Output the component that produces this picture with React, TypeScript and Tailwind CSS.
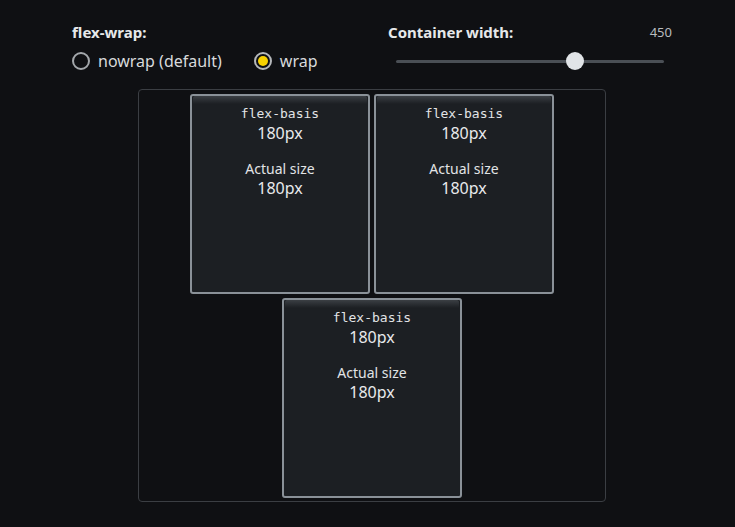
const boxes = [0, 1, 2];

const Box = () => (
  <div className="w-[180px] h-[200px] shrink-0 border-2 border-[#8a9198] rounded-[3px] bg-[#1c1f23] flex flex-col items-center">
    <div className="self-stretch h-[8px] mx-[1px] rounded-t-[2px] bg-gradient-to-b from-[#3b3f44] to-[#1c1f23]" />
    <div className="mt-[1px] font-['DejaVu_Sans_Mono',monospace] text-[13px] leading-[18px] text-[#e2e4e6]">flex-basis</div>
    <div className="text-[16px] leading-[20px] text-[#e8eaec]">180px</div>
    <div className="mt-[17px] text-[14px] leading-[18px] text-[#e2e4e6]">Actual size</div>
    <div className="text-[16px] leading-[20px] text-[#e8eaec]">180px</div>
  </div>
);

export default function App() {
  return (
    <div className="w-[735px] h-[527px] bg-[#0f1013] font-['Noto_Sans',sans-serif] text-[#e4e6e8] overflow-hidden">
      <div className="w-[600px] ml-[72px] pt-[21px]">
        <div className="flex">
          <div className="w-[316px]">
            <div className="text-[15px] leading-[22px] font-bold text-[#e6e8ea]">flex-wrap:</div>
            <div className="flex items-center mt-[7px] h-[22px]">
              <div className="w-[18px] h-[18px] rounded-full border-2 border-[#a3a7ab]" />
              <span className="ml-[8px] text-[16px] text-[#d8dadc]">nowrap (default)</span>
              <div className="ml-[32px] w-[18px] h-[18px] rounded-full border-2 border-[#b5b8bb] flex items-center justify-center">
                <div className="w-[10px] h-[10px] rounded-full bg-[#f7d100]" />
              </div>
              <span className="ml-[8px] text-[16px] text-[#d8dadc]">wrap</span>
            </div>
          </div>
          <div className="flex-1">
            <div className="flex items-center justify-between">
              <span className="text-[15px] leading-[22px] font-bold text-[#e6e8ea]">Container width:</span>
              <span className="text-[13px] leading-[22px] text-[#b8bbbe]">450</span>
            </div>
            <div className="relative mt-[7px] h-[22px] ml-[8px] mr-[8px] flex items-center">
              <div className="w-full h-[3px] rounded-full bg-[#4a4f55]" />
              <div className="absolute left-[170px] top-[2px] w-[18px] h-[18px] rounded-full bg-[#e1e4e7]" />
            </div>
          </div>
        </div>
        <div className="mt-[17px] flex justify-center">
          <div className="w-[468px] h-[413px] border border-[#3b3e43] rounded-[4px] p-[4px] flex flex-wrap justify-center content-start gap-[4px]">
            {boxes.map((b) => (
              <Box key={b} />
            ))}
          </div>
        </div>
      </div>
    </div>
  );
}
